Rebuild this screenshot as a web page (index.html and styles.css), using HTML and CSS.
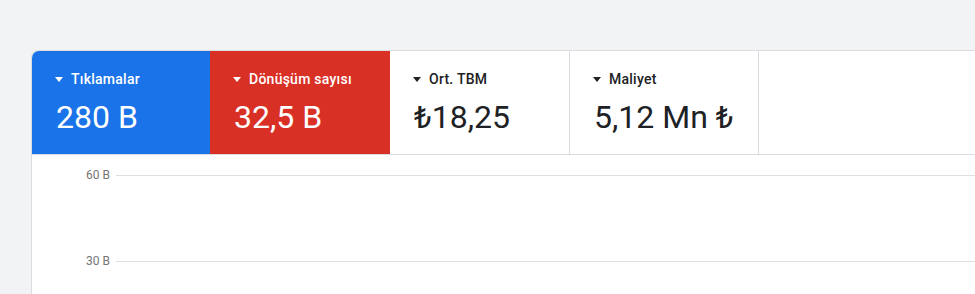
FILE: index.html
```html
<html>
<head>
	<meta charset="utf-8">
	<link rel="stylesheet" href="styles.css">
</head>
<body>
	<div class="card">
		<div class="tiles">
			<div class="tile tile-blue w178">
				<div class="label"><span class="caret"></span>Tıklamalar</div>
				<div class="value">280 B</div>
			</div>
			<div class="tile tile-red w180">
				<div class="label"><span class="caret"></span>Dönüşüm sayısı</div>
				<div class="value">32,5 B</div>
			</div>
			<div class="tile tile-plain w180">
				<div class="label"><span class="caret"></span>Ort. TBM</div>
				<div class="value">₺18,25</div>
			</div>
			<div class="tile tile-plain">
				<div class="label"><span class="caret"></span>Maliyet</div>
				<div class="value">5,12 Mn ₺</div>
			</div>
		</div>
		<div class="chart">
			<div class="axis"><span class="tick">60 B</span><span class="grid"></span></div>
			<div class="axis"><span class="tick">30 B</span><span class="grid"></span></div>
		</div>
	</div>
</body>
</html>
```
FILE: styles.css
```css
body {
	font-family: Roboto, "Liberation Sans", sans-serif;
	margin: 0px;
	padding: 50px 0px 0px 31px;
	background: #f1f3f4;
	overflow: hidden;
	color: #202124;
}
.card {
	width: 1000px;
	height: 300px;
	background: #ffffff;
	border: solid 1px #dadce0;
	border-right: none;
	border-radius: 8px 0px 0px 0px;
	overflow: hidden;
}
.tiles {
	display: flex;
	border-bottom: solid 1px #dadce0;
}
.tile {
	box-sizing: border-box;
	padding: 18px 24px 17px 24px;
}
.w178 {
	width: 178px;
}
.w180 {
	width: 180px;
}
.tile-blue {
	background: #1a73e8;
	color: #ffffff;
}
.tile-red {
	background: #d93025;
	color: #ffffff;
}
.tile-plain {
	border-right: solid 1px #dadce0;
}
.label {
	display: flex;
	align-items: center;
	font-size: 14px;
	font-weight: 500;
	letter-spacing: 0.25px;
	line-height: 20px;
	white-space: nowrap;
}
.caret {
	width: 0px;
	height: 0px;
	border-left: solid 4px transparent;
	border-right: solid 4px transparent;
	border-top: solid 5px currentColor;
	margin: 0px 8px 0px -1px;
}
.value {
	margin-top: 8px;
	font-size: 32px;
	line-height: 40px;
	white-space: nowrap;
}
.chart {
	padding-top: 13px;
}
.axis {
	display: flex;
	align-items: center;
	height: 14px;
	margin-bottom: 72px;
}
.tick {
	width: 78px;
	margin-right: 6px;
	text-align: right;
	font-size: 12px;
	color: #757575;
}
.grid {
	flex: 1;
	height: 1px;
	background: #e0e0e0;
}
```
